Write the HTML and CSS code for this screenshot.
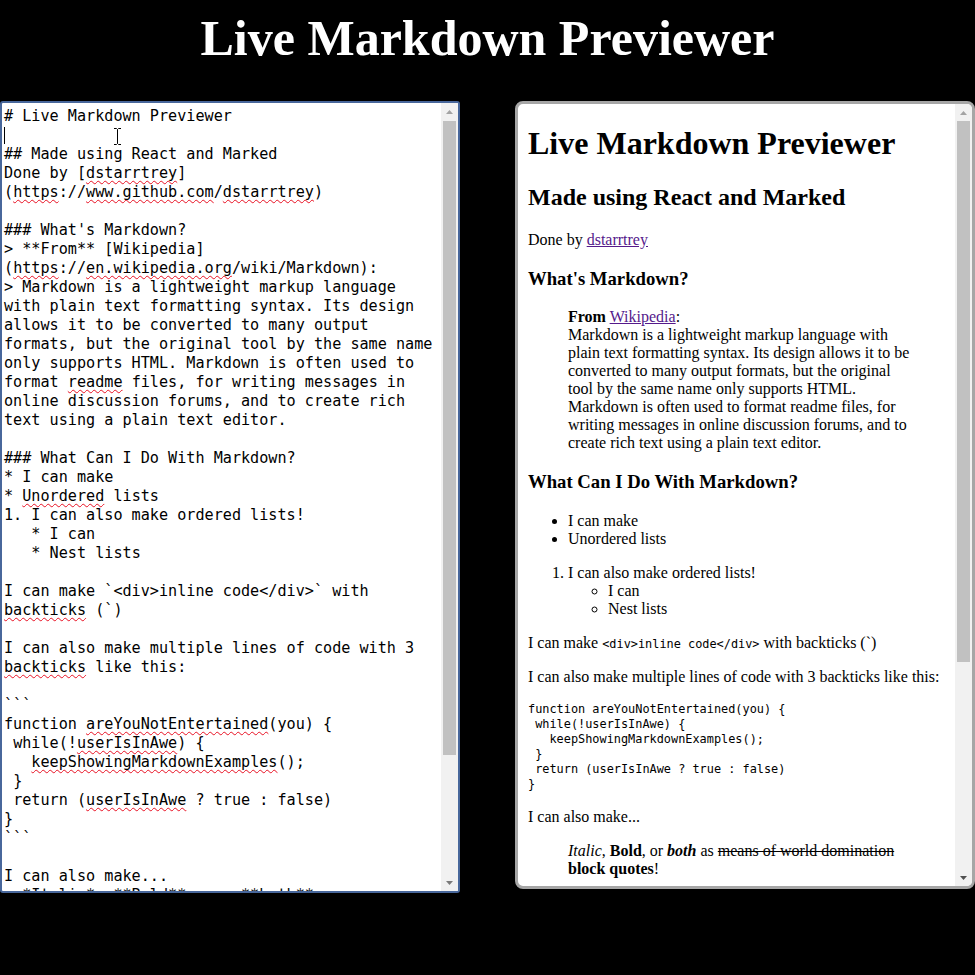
FILE: index.html
```html
<!DOCTYPE html>
<html lang="en">
<head>
<meta charset="utf-8">
<title>Live Markdown Previewer</title>
<link rel="stylesheet" href="styles.css">
</head>
<body>
<h1 class="title">Live Markdown Previewer</h1>
<main class="panes">
  <section class="editor">
    <div class="editor-text"># Live Markdown Previewer
<span class="caret"></span>
## Made using React and Marked
Done by [<span class="sp">dstarrtrey</span>]
(<span class="sp">https</span>://<span class="sp">www.github.com</span>/<span class="sp">dstarrtrey</span>)

### What's Markdown?
&gt; **From** [Wikipedia]
(<span class="sp">https</span>://<span class="sp">en.wikipedia.org</span>/wiki/Markdown):
&gt; Markdown is a lightweight markup language
with plain text formatting syntax. Its design
allows it to be converted to many output
formats, but the original tool by the same name
only supports HTML. Markdown is often used to
format <span class="sp">readme</span> files, for writing messages in
online discussion forums, and to create rich
text using a plain text editor.

### What Can I Do With Markdown?
* I can make
* <span class="sp">Unordered</span> lists
1. I can also make ordered lists!
   * I can
   * Nest lists

I can make &#96;&lt;div&gt;inline code&lt;/div&gt;&#96; with
<span class="sp">backticks</span> (&#96;)

I can also make multiple lines of code with 3
<span class="sp">backticks</span> like this:

&#96;&#96;&#96;
function <span class="sp">areYouNotEntertained</span>(you) {
 while(!<span class="sp">userIsInAwe</span>) {
   <span class="sp">keepShowingMarkdownExamples</span>();
 }
 return (<span class="sp">userIsInAwe</span> ? true : false)
}
&#96;&#96;&#96;

I can also make...
&gt; *Italic*, **Bold**, or _**both**_ as
~~means of world domination~~ **block quotes**!

And even add images:
![Markdown logo](https://markdown-here.com/img/icon256.png)</div>
    <div class="sb">
      <div class="sb-btn"><svg width="7" height="4" viewBox="0 0 7 4"><path d="M0 4L3.5 0L7 4Z" fill="#a3a3a3"/></svg></div>
      <div class="sb-track"><div class="sb-thumb" style="margin-top:1px;height:634px"></div></div>
      <div class="sb-btn"><svg width="7" height="4" viewBox="0 0 7 4"><path d="M0 0L3.5 4L7 0Z" fill="#7a7a7a"/></svg></div>
    </div>
    <svg class="ibeam" width="9" height="17" viewBox="0 0 9 17"><path d="M1 0.5H3.5L4.5 1.5L5.5 0.5H8M4.5 1.5V15.5M1 16.5H3.5L4.5 15.5L5.5 16.5H8" fill="none" stroke="#fff" stroke-width="2.2"/><path d="M1 0.5H3.5L4.5 1.5L5.5 0.5H8M4.5 1.5V15.5M1 16.5H3.5L4.5 15.5L5.5 16.5H8" fill="none" stroke="#000" stroke-width="1"/></svg>
  </section>

  <section class="preview">
    <div class="preview-content">
      <h1>Live Markdown Previewer</h1>
      <h2>Made using React and Marked</h2>
      <p>Done by <a class="link" href="#">dstarrtrey</a></p>
      <h3>What's Markdown?</h3>
      <blockquote><p><strong>From</strong> <a class="link" href="#">Wikipedia</a>:<br>Markdown is a lightweight markup language with plain text formatting syntax. Its design allows it to be converted to many output formats, but the original tool by the same name only supports HTML. Markdown is often used to format readme files, for writing messages in online discussion forums, and to create rich text using a plain text editor.</p></blockquote>
      <h3>What Can I Do With Markdown?</h3>
      <ul><li>I can make</li><li>Unordered lists</li></ul>
      <ol><li>I can also make ordered lists!<ul><li>I can</li><li>Nest lists</li></ul></li></ol>
      <p>I can make <code>&lt;div&gt;inline code&lt;/div&gt;</code> with backticks (&#96;)</p>
      <p>I can also make multiple lines of code with 3 backticks like this:</p>
<pre><code>function areYouNotEntertained(you) {
 while(!userIsInAwe) {
   keepShowingMarkdownExamples();
 }
 return (userIsInAwe ? true : false)
}</code></pre>
      <p>I can also make...</p>
      <blockquote><p><em>Italic</em>, <strong>Bold</strong>, or <em><strong>both</strong></em> as <del>means of world domination</del> <strong>block quotes</strong>!</p></blockquote>
      <p>And even add images:</p>
      <div class="img-placeholder"></div>
    </div>
    <div class="sb">
      <div class="sb-btn"><svg width="7" height="4" viewBox="0 0 7 4"><path d="M0 4L3.5 0L7 4Z" fill="#a3a3a3"/></svg></div>
      <div class="sb-track"><div class="sb-thumb" style="height:541px"></div></div>
      <div class="sb-btn"><svg width="7" height="4" viewBox="0 0 7 4"><path d="M0 0L3.5 4L7 0Z" fill="#505050"/></svg></div>
    </div>
  </section>
</main>
</body>
</html>
```
FILE: styles.css
```css
html, body {
  margin: 0;
  padding: 0;
  background: #000;
}

body {
  width: 975px;
  height: 975px;
  overflow: hidden;
  font-family: "Liberation Serif", "Times New Roman", serif;
}

.title {
  margin: 0;
  height: 76px;
  line-height: 76px;
  font-family: "Liberation Serif", "Times New Roman", serif;
  font-size: 50px;
  font-weight: bold;
  color: #fff;
  text-align: center;
}

.panes {
  margin-top: 25px;
  display: flex;
  justify-content: space-between;
  align-items: flex-start;
}

/* ---------- editor ---------- */
.editor {
  position: relative;
  box-sizing: border-box;
  width: 460px;
  height: 792px;
  border: 2px solid #48679b;
  border-radius: 3px;
  background: #fff;
  display: flex;
  overflow: hidden;
}

.editor-text {
  flex: 1;
  min-width: 0;
  overflow: hidden;
  padding: 4px 0 0 2px;
  font-family: "DejaVu Sans Mono", "Liberation Mono", monospace;
  font-size: 15.15px;
  line-height: 19px;
  color: #000;
  white-space: pre-wrap;
}

.sp {
  text-decoration: underline wavy #e81123;
  text-decoration-thickness: 1px;
  text-underline-offset: 2px;
  text-decoration-skip-ink: none;
}

.caret {
  display: inline-block;
  width: 1px;
  height: 17px;
  background: #000;
  vertical-align: -4px;
}

.ibeam {
  position: absolute;
  left: 111px;
  top: 25px;
}

/* ---------- scrollbar ---------- */
.sb {
  flex: none;
  width: 17px;
  background: #f1f1f1;
  display: flex;
  flex-direction: column;
}

.sb-btn {
  height: 17px;
  flex: none;
  display: flex;
  align-items: center;
  justify-content: center;
}

.sb-btn svg {
  display: block;
}

.sb-track {
  flex: 1;
  padding: 0 2px;
}

.sb-thumb {
  background: #c1c1c1;
}

/* ---------- preview ---------- */
.preview {
  box-sizing: border-box;
  width: 460px;
  height: 788px;
  border: 3px solid #a6a6a6;
  border-radius: 8px;
  background: #fff;
  display: flex;
  overflow: hidden;
}

.preview-content {
  flex: 1;
  min-width: 0;
  overflow: hidden;
  padding: 0 3px 0 10px;
  font-family: "Liberation Serif", "Times New Roman", serif;
  font-size: 16px;
  color: #000;
}

.preview-content h1 {
  font-size: 32px;
  margin: 21.44px 0;
}

.preview-content h2 {
  font-size: 24px;
  margin: 19.92px 0;
}

.preview-content h3 {
  font-size: 18.72px;
  margin: 18.72px 0;
}

.preview-content p {
  margin: 16px 0;
}

.preview-content blockquote {
  margin: 16px 40px;
}

.preview-content ul,
.preview-content ol {
  margin: 16px 0;
  padding-left: 40px;
}

.preview-content li ul {
  margin: 0;
  list-style-type: circle;
}

.link {
  color: #551a8b;
  text-decoration: underline;
}

.preview-content code {
  font-family: "DejaVu Sans Mono", "Liberation Mono", monospace;
  font-size: 11.88px;
}

.preview-content pre {
  margin: 13px 0;
  line-height: 15px;
  font-family: "DejaVu Sans Mono", "Liberation Mono", monospace;
  font-size: 11.88px;
}

.img-placeholder {
  width: 200px;
  height: 200px;
  background: #eee;
}
```
